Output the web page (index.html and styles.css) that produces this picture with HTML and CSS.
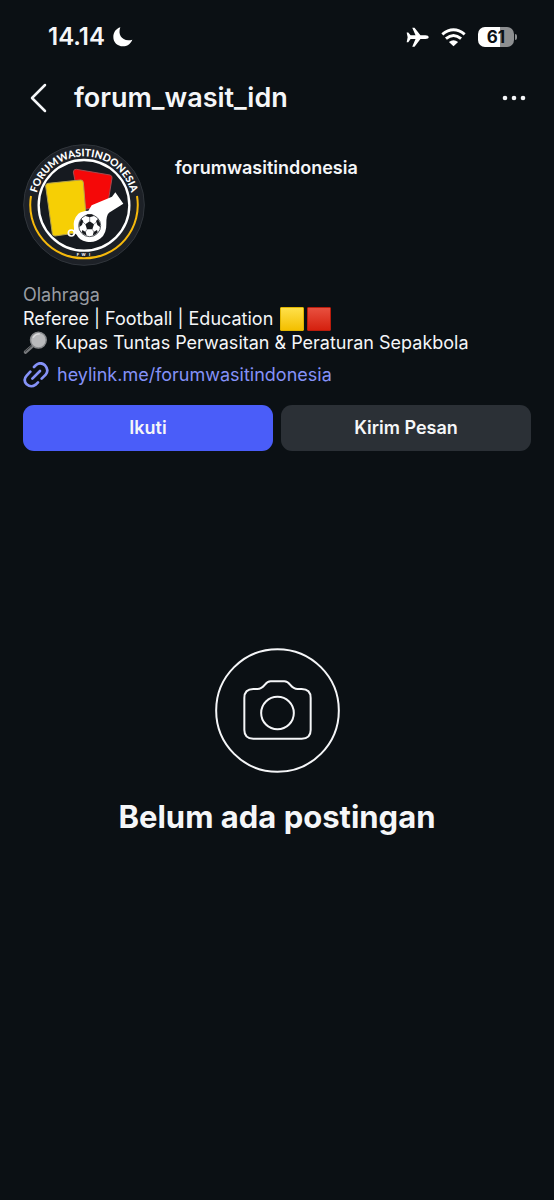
FILE: index.html
```html
<!DOCTYPE html>
<html lang="id">
<head>
    <meta charset="UTF-8">
    <meta name="viewport" content="width=device-width, initial-scale=1.0">
    <title>forum_wasit_idn</title>
    <link rel="stylesheet" href="styles.css">
</head>
<body>
    <div class="status-bar">
        <div class="status-left">
            <span class="time">14.14</span>
            <svg class="moon" viewBox="0 0 60 60" aria-hidden="true">
                <path fill="#fff" d="M22 1C13 25 29 46 58 38C53 51 42 58 30 58C13 58 1 46 1 30C1 16 9 5 22 1Z"/>
            </svg>
        </div>
        <div class="status-right">
            <svg class="plane" viewBox="50 50 70 60" aria-hidden="true">
                <path fill="#fff" d="M52 66H57L64 75H79L69 52H76L94 75H109Q119 76 119 80.500Q119 85 109 86H94L76 110H69L79 86H64L57 96H52L55 80.500Z"/>
            </svg>
            <svg class="wifi" viewBox="154 50 76 58" aria-hidden="true">
                <g fill="none" stroke="#fff" stroke-width="9">
                    <path d="M158 71Q192 43 226 71"/>
                    <path d="M169 84Q192 65 215 84"/>
                </g>
                <path fill="#fff" d="M178 94Q192 83 206 94L192 107Z"/>
            </svg>
            <span class="battery">61</span>
        </div>
    </div>

    <header class="top-bar">
        <button class="icon-button" type="button" aria-label="Kembali">
            <svg class="back" viewBox="0 0 18 30" aria-hidden="true">
                <path d="M15 2L2 15L15 28" fill="none" stroke="#f5f6f8" stroke-width="2.500" stroke-linecap="round" stroke-linejoin="round"/>
            </svg>
        </button>
        <h1>forum_wasit_idn</h1>
        <button class="icon-button" type="button" aria-label="Opsi lainnya">
            <svg class="more" viewBox="0 0 24 6" aria-hidden="true">
                <g fill="#f5f6f8"><circle cx="3" cy="3" r="2.300"/><circle cx="12" cy="3" r="2.300"/><circle cx="21" cy="3" r="2.300"/></g>
            </svg>
        </button>
    </header>

    <main>
        <section class="profile">
            <svg class="avatar" viewBox="39 28 366 366" role="img" aria-label="Forum Wasit Indonesia">
                <defs>
                    <path id="arc" d="M76 211A146 146 0 0 1 368 211"/>
                </defs>
                <circle cx="222" cy="211" r="181" fill="#1d2127" stroke="#30353b" stroke-width="3"/>
                <circle cx="222" cy="212" r="136" fill="#161a20" stroke="#fff" stroke-width="7"/>
                <path d="M63 184A160 160 0 0 0 222 371" fill="none" stroke="#f6b90c" stroke-width="6"/>
                <path d="M381 184A160 160 0 0 1 222 371" fill="none" stroke="#f6b90c" stroke-width="6"/>
                <text class="ring-text"><textPath href="#arc" startOffset="50%">FORUMWASITINDONESIA</textPath></text>
                <text class="ring-initials" y="363"><tspan x="204">F</tspan><tspan x="221">W</tspan><tspan x="239">I</tspan></text>
                <!-- cards -->
                <path d="M199 104L300 121Q307 123 306 130L292 216L212 225L190 112Q191 103 199 104Z" fill="#f50808" stroke="#a44a50" stroke-width="3"/>
                <path d="M114 146L212 136Q219 136 220 143L232 290L135 304Q128 304 127 297L107 154Q107 147 114 146Z" fill="#f6cf05" stroke="#b5a34b" stroke-width="3"/>
                <!-- whistle -->
                <circle cx="184" cy="295" r="9" fill="none" stroke="#fff" stroke-width="5"/>
                <path d="M205 237Q215 229 235 228L245 212L306 186L316 173L340 207L297 234Q288 243 289 268Q290 296 272 311Q255 325 230 321Q207 316 200 300L192 294L192 282Q187 255 205 237Z" fill="#fff"/>
                <circle cx="239" cy="273" r="33" fill="#fff" stroke="#55585d" stroke-width="3"/>
                <g fill="#17191d">
                    <path d="M239 260L252 269L247 284H231L226 269Z"/>
                    <path d="M226 244L239 248L252 244L246 239H232Z"/>
                    <path d="M208 265L214 253L220 259L216 271L208 277Z"/>
                    <path d="M270 265L264 253L258 259L262 271L270 277Z"/>
                    <path d="M215 293L217 286L227 292L230 303Q221 301 215 293Z"/>
                    <path d="M263 293L261 286L251 292L248 303Q257 301 263 293Z"/>
                </g>
                <path d="M239 260V247M252 269L259 262M247 284L252 292M231 284L226 292M226 269L219 262" stroke="#55585d" stroke-width="2"/>
            </svg>
            <h2>forumwasitindonesia</h2>
        </section>

        <section class="bio">
            <p class="category">Olahraga</p>
            <p>Referee | Football | Education <span class="card yellow"></span><span class="card red"></span></p>
            <p>
                <svg class="glass" viewBox="0 0 25 25" aria-hidden="true">
                    <path d="M2 22L10 15" stroke="#77797c" stroke-width="3.500" stroke-linecap="round"/>
                    <path d="M1.500 21.500L9 15" stroke="#303336" stroke-width="1"/>
                    <circle cx="15.500" cy="9.500" r="8.200" fill="#b9babc" stroke="#87898c" stroke-width="1.500"/>
                    <path d="M10 7Q12 3 17 3" fill="none" stroke="#dfdfe0" stroke-width="1.500"/>
                </svg>
                Kupas Tuntas Perwasitan &amp; Peraturan Sepakbola
            </p>
            <a class="bio-link" href="#">
                <svg class="chain" viewBox="38 248 78 78" aria-hidden="true">
                    <g fill="none" stroke="#8592f8" stroke-width="8" stroke-linecap="round">
                        <path d="M66 298L89 275"/>
                        <path d="M71 263L77 257Q91 246 104 258Q117 272 106 286L94 298"/>
                        <path d="M60 277L49 289Q37 302 49 315Q62 326 76 316L83 309"/>
                    </g>
                </svg>
                <span>heylink.me/forumwasitindonesia</span>
            </a>
        </section>

        <div class="actions">
            <button class="follow" type="button">Ikuti</button>
            <button class="message" type="button">Kirim Pesan</button>
        </div>

        <section class="empty">
            <svg class="camera" viewBox="43 39 375 375" aria-hidden="true">
                <g fill="none" stroke="#f5f6f8" stroke-width="6">
                    <circle cx="230.500" cy="226.500" r="184"/>
                    <circle cx="230.500" cy="234" r="49"/>
                    <path d="M131 189Q131 162 158 162H170C194 162 190 139 210 139H251C271 139 267 162 291 162H303Q330 162 330 189V285Q330 311 303 311H158Q131 311 131 285Z"/>
                </g>
            </svg>
            <h2>Belum ada postingan</h2>
        </section>
    </main>
</body>
</html>
```
FILE: styles.css
```css
* {
    box-sizing: border-box;
}
body {
    margin: 0;
    min-height: 100vh;
    background-color: #0b1014;
    color: #f5f6f8;
    font-family: Inter, "Liberation Sans", sans-serif;
    font-size: 18px;
    line-height: 24px;
}
h1, h2, p {
    margin: 0;
}
svg {
    display: block;
    flex-shrink: 0;
}
button {
    border: none;
    padding: 0;
    color: inherit;
    font: inherit;
    cursor: pointer;
}
.status-bar {
    display: flex;
    justify-content: space-between;
    align-items: center;
    height: 74px;
    padding: 0 40px 0 48px;
}
.status-left, .status-right {
    display: flex;
    align-items: center;
}
.status-left {
    gap: 8px;
}
.status-right {
    gap: 12px;
}
.time {
    font-size: 24px;
    font-weight: 600;
}
.moon {
    width: 20px;
    height: 20px;
}
.plane {
    width: 23px;
    height: 20px;
}
.wifi {
    width: 25px;
    height: 20px;
}
.battery {
    position: relative;
    width: 36px;
    border-radius: 7px;
    background: linear-gradient(to right, #fff 61%, #8d8f91 61%);
    color: #0b1014;
    font-size: 17px;
    font-weight: 700;
    line-height: 20px;
    text-align: center;
}
.battery::after {
    content: "";
    position: absolute;
    top: 7px;
    right: -3px;
    width: 2px;
    height: 6px;
    border-radius: 0 2px 2px 0;
    background: #8d8f91;
}
.top-bar {
    display: flex;
    align-items: center;
    height: 48px;
    padding: 0 28px 0 30px;
}
.top-bar h1 {
    flex: 1;
    margin-left: 26px;
    font-size: 27px;
    font-weight: 600;
    line-height: 32px;
}
.icon-button {
    background: none;
}
.back {
    width: 18px;
    height: 30px;
}
.more {
    width: 24px;
    height: 6px;
}
main {
    padding: 22px 23px;
}
.profile {
    display: flex;
    gap: 30px;
}
.profile h2 {
    margin-top: 12px;
    font-size: 18px;
    font-weight: 600;
}
.avatar {
    width: 122px;
    height: 122px;
}
.ring-text {
    fill: #fff;
    font-family: Lato, "Noto Sans", sans-serif;
    font-size: 31px;
    font-weight: 900;
    text-anchor: middle;
}
.ring-initials {
    fill: #fff;
    font-size: 12px;
    font-weight: 700;
    text-anchor: middle;
}
.bio {
    margin-top: 17px;
}
.bio p {
    display: flex;
    align-items: center;
}
.bio .category {
    color: #989ca2;
}
.card {
    width: 24px;
    height: 24px;
    margin-right: 3px;
    border-radius: 1px;
}
.yellow {
    margin-left: 7px;
    border: 1px solid #e0b400;
    background: linear-gradient(#ffe04a, #f4bf00);
}
.red {
    border: 1px solid #b91c0c;
    background: linear-gradient(#e8503f, #d5200e);
}
.glass {
    width: 25px;
    height: 24px;
    margin-right: 7px;
}
.bio-link {
    display: flex;
    align-items: center;
    gap: 8px;
    margin-top: 7px;
    color: #8592f8;
    text-decoration: none;
}
.chain {
    width: 26px;
    height: 26px;
}
.actions {
    display: grid;
    grid-template-columns: 1fr 1fr;
    gap: 8px;
    margin-top: 17px;
}
.actions button {
    height: 46px;
    border-radius: 11px;
    font-weight: 600;
}
.follow {
    background: #4a5df9;
}
.message {
    background: #2b3036;
}
.empty {
    display: flex;
    flex-direction: column;
    align-items: center;
    gap: 24px;
    margin-top: 197px;
}
.empty h2 {
    font-size: 31px;
    font-weight: 700;
    line-height: 40px;
}
.camera {
    width: 125px;
    height: 125px;
}
```
